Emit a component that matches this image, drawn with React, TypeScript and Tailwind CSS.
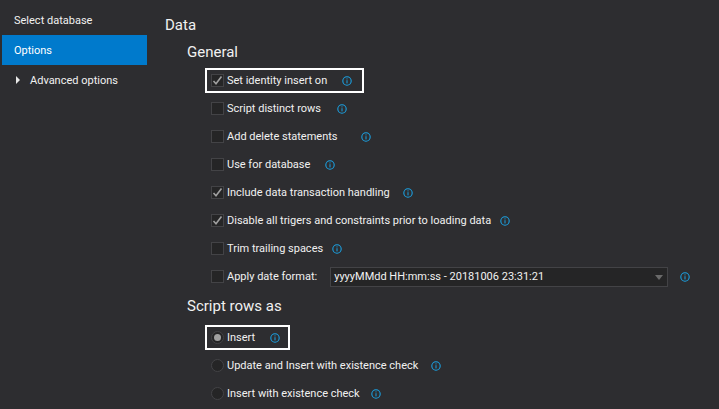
type Row = {
  label: string;
  checked?: boolean;
  gap: number;
  boxed?: boolean;
};

const dataRows: Row[] = [
  { label: "Set identity insert on", checked: true, gap: 15, boxed: true },
  { label: "Script distinct rows", gap: 16 },
  { label: "Add delete statements", gap: 23 },
  { label: "Use for database", gap: 15 },
  { label: "Include data transaction handling", checked: true, gap: 13 },
  { label: "Disable all trigers and constraints prior to loading data", checked: true, gap: 9 },
  { label: "Trim trailing spaces", gap: 9 },
];

const radioRows: Row[] = [
  { label: "Insert", checked: true, gap: 15, boxed: true },
  { label: "Update and Insert with existence check", gap: 13 },
  { label: "Insert with existence check", gap: 11 },
];

function InfoIcon() {
  return (
    <svg width="10" height="10" viewBox="0 0 10 10" fill="none" className="shrink-0">
      <circle cx="5" cy="5" r="4.2" stroke="#1ba1e2" strokeWidth="1.1" />
      <rect x="4.5" y="4.2" width="1" height="3.2" fill="#1ba1e2" />
      <rect x="4.5" y="2.4" width="1" height="1" fill="#1ba1e2" />
    </svg>
  );
}

function Checkbox({ checked }: { checked?: boolean }) {
  return (
    <span className="flex h-[13px] w-[13px] shrink-0 items-center justify-center border border-[#434346] bg-[#252526]">
      {checked && (
        <svg width="11" height="11" viewBox="0 0 11 11" fill="none">
          <path d="M1.5 6 L4 8.8 L9.5 1.5" stroke="#a0a0a0" strokeWidth="1.6" />
        </svg>
      )}
    </span>
  );
}

function Radio({ checked }: { checked?: boolean }) {
  return (
    <span className="flex h-[13px] w-[13px] shrink-0 items-center justify-center rounded-full border border-[#434346] bg-[#252526]">
      {checked && <span className="h-[7px] w-[7px] rounded-full bg-[#a0a0a0]" />}
    </span>
  );
}

function OptionRow({ row, radio }: { row: Row; radio?: boolean }) {
  const body = (
    <>
      {radio ? <Radio checked={row.checked} /> : <Checkbox checked={row.checked} />}
      <span className="ml-[3px] whitespace-nowrap pt-px">{row.label}</span>
      <span style={{ marginLeft: row.gap }} className="flex">
        <InfoIcon />
      </span>
    </>
  );

  if (row.boxed) {
    return (
      <div
        className={
          radio
            ? "-ml-[6px] flex h-[25px] w-fit items-center border-2 border-white pl-[4px] pr-[8px]"
            : "-ml-[6px] flex h-[25px] w-fit items-center border-2 border-white pl-[4px] pr-[10px]"
        }
      >
        {body}
      </div>
    );
  }
  return <div className="flex h-[25px] items-center">{body}</div>;
}

export default function App() {
  return (
    <div
      className="flex h-[409px] w-[719px] overflow-hidden bg-[#2d2d30] text-[11px] text-[#f1f1f1]"
      style={{ fontFamily: 'Roboto, "Open Sans", sans-serif' }}
    >
      <aside className="w-[147px] shrink-0 pt-[5px]">
        <div className="flex h-[30px] items-center pl-[14px] pt-[2px]">Select database</div>
        <div className="ml-[2px] flex h-[30px] items-center bg-[#007acc] pl-[12px] pt-[2px] text-white">Options</div>
        <div className="flex h-[30px] items-center pl-[16px]">
          <span className="h-0 w-0 border-y-[4px] border-l-[4px] border-y-transparent border-l-[#e8e8e8]" />
          <span className="ml-[10px] pt-[2px]">Advanced options</span>
        </div>
      </aside>

      <main className="flex-1 pl-[18px] pt-[14px]">
        <h1 className="text-[15px] leading-[22px]">Data</h1>
        <h2 className="ml-[22px] mt-[5px] text-[15px] leading-[22px]">General</h2>

        <div className="ml-[46px] mt-[5px] flex flex-col gap-[3px]">
          {dataRows.map((r) => (
            <OptionRow key={r.label} row={r} />
          ))}
          <div className="flex h-[25px] items-center">
            <Checkbox />
            <span className="ml-[3px] whitespace-nowrap pt-px">Apply date format:</span>
            <div className="ml-[13px] mt-px flex h-[20px] w-[338px] items-center justify-between border border-[#434346] bg-[#252526] pl-[3px] pr-[2px]">
              <span className="whitespace-nowrap pt-px">yyyyMMdd HH:mm:ss - 20181006 23:31:21</span>
              <span className="mr-[2px] h-0 w-0 border-x-[4px] border-t-[5px] border-x-transparent border-t-[#6a6a6a]" />
            </div>
            <span className="ml-[12px] flex">
              <InfoIcon />
            </span>
          </div>
        </div>

        <h2 className="ml-[22px] mt-[6px] text-[15px] leading-[22px]">Script rows as</h2>

        <div className="ml-[46px] mt-[8px] flex flex-col gap-[3px]">
          {radioRows.map((r) => (
            <OptionRow key={r.label} row={r} radio />
          ))}
        </div>
      </main>
    </div>
  );
}
